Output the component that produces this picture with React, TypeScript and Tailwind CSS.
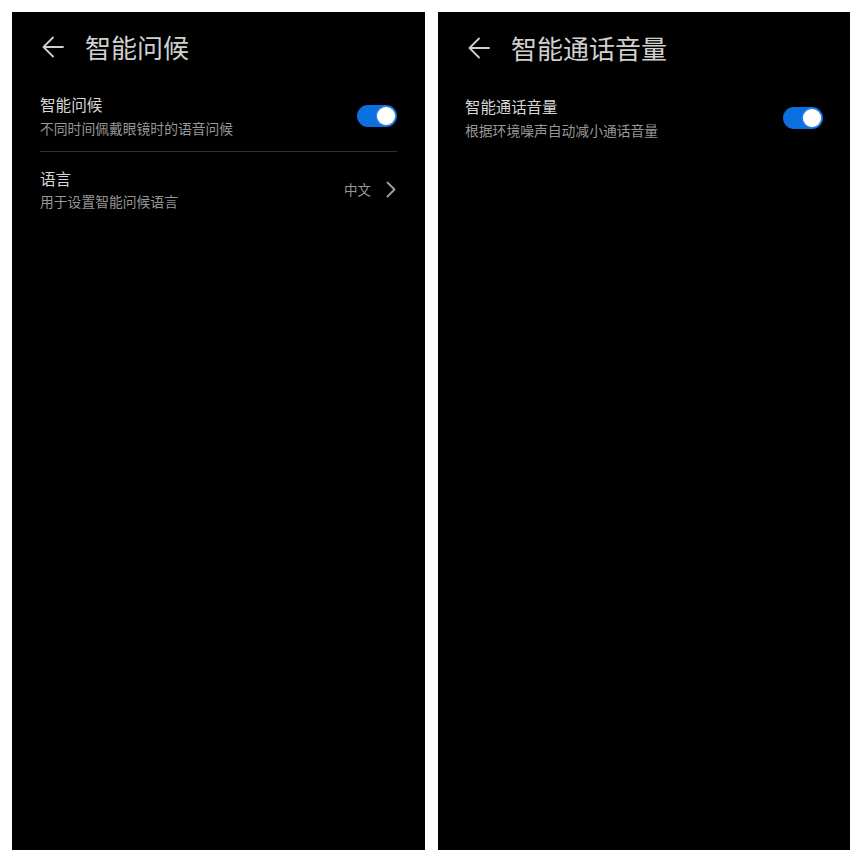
import React from "react";

const FONT = { fontFamily: '"Noto Sans CJK SC", "Noto Sans", sans-serif' };

function BackArrow() {
  return (
    <svg width="22" height="22" viewBox="0 0 22 22" fill="none" className="shrink-0">
      <path d="M21 11H1.5M11 1.5L1.5 11L11 20.5" stroke="#cfcfcf" strokeWidth="1.8" strokeLinecap="round" strokeLinejoin="round" />
    </svg>
  );
}

function Chevron() {
  return (
    <svg width="10" height="17" viewBox="0 0 10 17" fill="none" className="shrink-0">
      <path d="M1.5 1.5L8.5 8.5L1.5 15.5" stroke="#a0a0a0" strokeWidth="1.8" strokeLinecap="round" strokeLinejoin="round" />
    </svg>
  );
}

function Toggle() {
  return (
    <div className="w-[40px] h-[22px] rounded-full bg-[#0c6fe0] flex items-center justify-end pr-[2px] shrink-0">
      <div className="w-[18px] h-[18px] rounded-full bg-white shadow-[0_0_2px_#9cc8ff]" />
    </div>
  );
}

function Header({ title }: { title: string }) {
  return (
    <div className="h-[70px] flex items-center pl-[30px]">
      <BackArrow />
      <span className="ml-[21px] text-[26px] leading-[34px] text-[#d0d0d0]">{title}</span>
    </div>
  );
}

function App() {
  return (
    <div className="w-[863px] h-[863px] bg-white flex gap-[13px] pl-[12px] pt-[12px]" style={FONT}>
      {/* Left panel */}
      <div className="w-[413px] h-[838px] bg-black flex flex-col">
        <Header title="智能问候" />
        <div className="px-[28px]">
          <div className="flex items-center pt-[11px] pb-[13px] border-b border-[#2e2e2e]">
            <div className="flex-1 flex flex-col gap-[3px]">
              <span className="text-[15.6px] leading-[22px] text-[#d6d6d6]">智能问候</span>
              <span className="text-[13.8px] leading-[20px] text-[#979797]">不同时间佩戴眼镜时的语音问候</span>
            </div>
            <Toggle />
          </div>
          <div className="flex items-center pt-[15px]">
            <div className="flex-1 flex flex-col gap-[2px]">
              <span className="text-[15.6px] leading-[22px] text-[#d6d6d6]">语言</span>
              <span className="text-[13.8px] leading-[20px] text-[#979797]">用于设置智能问候语言</span>
            </div>
            <span className="text-[13.5px] leading-[20px] text-[#979797] mr-[15px]">中文</span>
            <div className="mr-[1px]">
              <Chevron />
            </div>
          </div>
        </div>
      </div>

      {/* Right panel */}
      <div className="w-[412px] h-[838px] bg-black flex flex-col">
        <div className="pt-[1px]">
          <Header title="智能通话音量" />
        </div>
        <div className="px-[27px]">
          <div className="flex items-center pt-[12px] pb-[13px]">
            <div className="flex-1 flex flex-col gap-[3px]">
              <span className="text-[15.4px] leading-[22px] text-[#d6d6d6]">智能通话音量</span>
              <span className="text-[13.8px] leading-[20px] text-[#979797]">根据环境噪声自动减小通话音量</span>
            </div>
            <Toggle />
          </div>
        </div>
      </div>
    </div>
  );
}

export default App;
